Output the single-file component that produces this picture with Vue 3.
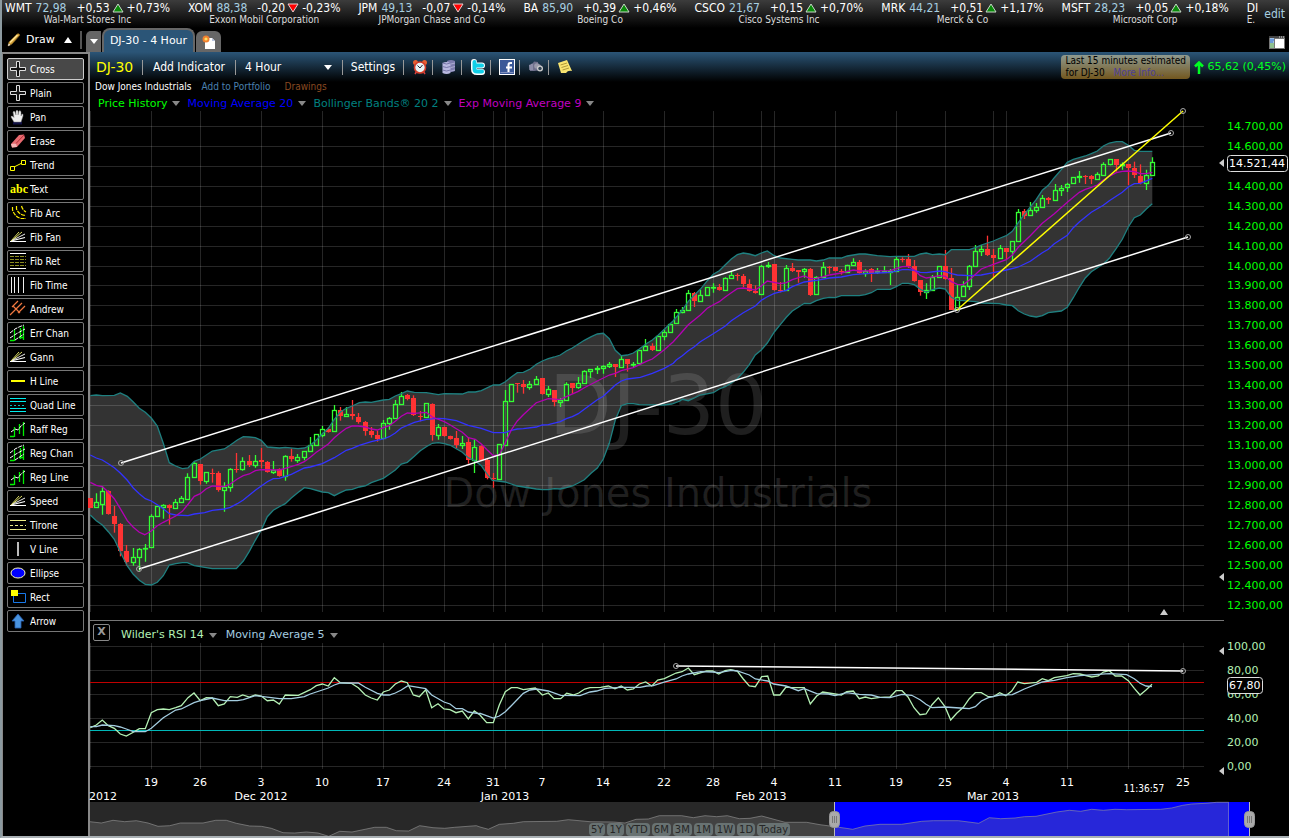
<script setup>
import { ref } from 'vue'

const quotes = [
  { s: 'WMT', p: '72,98', d: '+0,53', up: true, c: '+0,73%', n: 'Wal-Mart Stores Inc' },
  { s: 'XOM', p: '88,38', d: '-0,20', up: false, c: '-0,23%', n: 'Exxon Mobil Corporation' },
  { s: 'JPM', p: '49,13', d: '-0,07', up: false, c: '-0,14%', n: 'JPMorgan Chase and Co' },
  { s: 'BA', p: '85,90', d: '+0,39', up: true, c: '+0,46%', n: 'Boeing Co' },
  { s: 'CSCO', p: '21,67', d: '+0,15', up: true, c: '+0,70%', n: 'Cisco Systems Inc' },
  { s: 'MRK', p: '44,21', d: '+0,51', up: true, c: '+1,17%', n: 'Merck & Co' },
  { s: 'MSFT', p: '28,23', d: '+0,05', up: true, c: '+0,18%', n: 'Microsoft Corp' }
]

const tools = [
  ['Cross', 'cross'], ['Plain', 'cross'], ['Pan', 'pan'], ['Erase', 'erase'], ['Trend', 'trend'],
  ['Text', 'text'], ['Fib Arc', 'arc'], ['Fib Fan', 'fan'], ['Fib Ret', 'ret'], ['Fib Time', 'time'],
  ['Andrew', 'andrew'], ['Err Chan', 'chan'], ['Gann', 'fan'], ['H Line', 'hline'], ['Quad Line', 'quad'],
  ['Raff Reg', 'reg'], ['Reg Chan', 'chan'], ['Reg Line', 'reg'], ['Speed', 'fan'], ['Tirone', 'tirone'],
  ['V Line', 'vline'], ['Ellipse', 'ellipse'], ['Rect', 'rect'], ['Arrow', 'arrow']
]
const tool = ref('Cross')
const period = ref('4 Hour')
const periods = ['1 Hour', '4 Hour', 'Daily']
const ranges = ['5Y', '1Y', 'YTD', '6M', '3M', '1M', '1W', '1D', 'Today']
const indicators = [
  { n: 'Price History', k: 'price' },
  { n: 'Moving Average 20', k: 'ma' },
  { n: 'Bollinger Bands® 20 2', k: 'bb' },
  { n: 'Exp Moving Average 9', k: 'ema' }
]

// Candles: direction, high, body top, body bottom, low; three units per pixel below y
const candleBlocks = [
  { y: 380, d: `R 354 354 384 384,G 340 367 382 382,G 318 334 373 404,R 331 334 404 404,R 378 408 434 458,R 429 432 514 529,R 495 514 548 557,G 504 532 547 557,G 504 507 532 572,G 492 505 506 545,G 403 409 502 502,G 378 379 409 409,G 373 376 381 416,R 373 376 386 434,G 357 367 385 385,G 348 355 367 367,G 280 292 358 358,G 247 250 292 292,R 252 253 305 314,G 277 277 304 311,R 266 279 281 308,R 274 280 332 335,G 307 322 331 395,G 265 268 322 335,R 219 267 271 278,G 232 244 268 272,R 225 244 257 261,G 225 244 257 263,R 204 240 248 265,R 243 246 278 278,G 243 270 278 282,R 265 267 288 290,G 226 229 289 302,R 206 229 239 245,G 222 232 241 248,G 213 214 233 241,G 171 196 214 214,G 163 163 196 196,G 138 148 166 172,R 142 148 158 158,G 75 91 154 156,R 81 90 110 122,G 81 104 109 109,R 60 104 110 119,R 99 111 128 131,R 123 126 155 167,R 141 153 167 173,R 152 165 177 185,G 120 130 175 178` },
  { y: 320, d: `G 291 296 311 329,G 240 253 295 295,G 216 230 253 254,R 222 226 237 241,R 226 234 287 288,R 273 288 293 304,G 250 250 292 292,R 250 253 347 362,G 312 322 347 359,R 320 321 350 350,R 347 349 359 359,R 333 354 377 385,G 348 370 377 387,R 352 366 422 431,G 358 382 420 459,R 376 379 420 420,R 417 420 476 478,R 459 474 479 503,G 373 373 478 478,G 210 244 376 376,G 193 193 244 244,R 189 190 194 218,R 180 192 203 221,G 183 193 202 209,G 168 178 193 193,R 174 175 224 224,G 198 208 223 231,R 210 211 248 259,G 234 242 247 261,G 187 193 241 241,R 190 191 204 221,G 171 190 203 206,G 151 154 190 190,G 148 148 154 174,G 138 146 148 162,G 136 139 145 161,G 126 133 138 144,R 132 133 143 171,G 108 118 142 142,R 117 118 132 155,G 126 132 134 141,G 91 91 130 130,G 57 79 91 93,R 70 80 92 93,G 49 49 91 91,G 28 37 49 61,G 13 13 37 37` },
  { y: 230, d: `G 237 247 280 280,G 231 241 247 250,G 180 190 241 241,R 186 190 215 231,G 179 196 214 214,G 172 172 196 196,G 160 171 173 188,R 162 171 182 182,G 142 145 181 181,G 124 136 145 147,R 130 136 140 152,R 132 138 164 171,R 148 163 185 185,R 166 183 191 191,G 105 109 193 193,G 96 105 109 114,R 102 102 182 182,R 156 181 183 187,G 105 115 181 183,R 99 114 123 126,R 120 121 126 158,G 114 118 124 143,R 114 117 195 198,G 139 142 193 193,G 96 112 142 142,R 108 112 116 131,R 111 111 124 124,R 117 123 126 134,G 104 106 127 127,G 85 97 107 107,R 90 96 131 131,G 118 124 131 140,R 114 118 129 156,G 114 124 128 132,G 108 123 126 126,G 117 123 126 165,G 79 88 123 123,R 82 87 90 97,R 72 87 109 114,R 90 108 155 155,R 150 151 188 197,G 160 182 188 207,G 135 142 181 181,G 109 109 142 142,R 60 108 149 149` },
  { y: 105, d: `R 489 519 615 615,G 538 577 613 613,G 529 544 574 574,G 480 484 544 555,G 420 439 484 484,G 421 433 438 453,R 392 432 452 453,R 432 450 461 516,G 420 430 460 460,R 429 430 443 462,G 408 409 439 466,G 312 322 409 409,R 312 320 333 342,G 291 316 331 331,G 294 306 316 323,G 270 280 307 307,R 276 280 287 297,G 237 256 286 286,G 240 250 256 273,G 233 238 248 261,G 217 217 235 235,G 198 213 217 233,R 210 213 217 237,R 210 213 224 237,G 202 208 223 223,G 172 178 211 211,G 162 163 178 181,R 162 163 182 200,G 172 177 182 194,R 177 178 191 240,R 170 190 212 219,R 178 213 236 238,G 194 211 235 255,G 157 172 211 211` }
]
const candles = candleBlocks
  .flatMap(b => b.d.split(',').map(row => {
    const [dir, ...v] = row.split(' ')
    const [h, t, bo, l] = v.map(n => b.y + Number(n) / 3)
    return { up: dir === 'G', h, t: Math.floor(t), b: Math.floor(bo), l }
  }))
  .map((c, i) => ({ ...c, x: Math.floor(90.3 + 6.106 * i) + 0.5 }))

// Turns "x,y x,y ..." runs, three units per pixel from an origin, into one point list
const trace = (...runs) => runs
  .map(([ox, oy, s]) => s.split(' ').map(p => {
    const [x, y] = p.split(',').map(Number)
    return `${(ox + x / 3).toFixed(1)},${(oy + y / 3).toFixed(1)}`
  }).join(' '))
  .join(' ')

const upper = trace(
  [88, 380, '7,47 25,45 43,47 79,46 97,39 118,49 136,66 154,85 172,97 190,114 208,138 226,190 244,248 263,258 283,266 300,264 319,244 337,237 373,213 409,207 427,195 448,180 466,170 484,171 502,173 520,181 538,201 574,204 592,202 630,206 649,204 667,196 685,180 703,161 721,145 739,118 757,96 775,85 793,78 814,68 832,66 850,67'],
  [380, 320, '10,240 28,238 46,228 64,221 82,213 103,217 139,218 175,224 193,221 247,222 265,216 286,216 304,212 340,195 358,195 376,185 394,171 412,158 430,157 451,147 469,133 487,123 505,116 523,111 541,105 559,93 577,84 613,61 634,50 652,42 670,40 688,56 706,91 724,107 742,105 760,99 778,87 799,71 817,60 835,45 853,28 880,2'],
  [640, 230, '127,240 145,214 163,196 181,178 202,152 220,133 238,122 256,104 274,87 292,74 310,69 328,72 346,77 364,69 382,63 403,77 421,84 457,88 475,90 511,90 529,93 550,90 568,84 604,84 622,78 658,72 676,72 712,77 750,80 769,79 823,79 841,72 859,69 877,74 898,72 916,74'],
  [930, 105, '64,434 118,434 136,428 154,420 172,414 190,408 211,399 229,392 247,379 265,353 283,328 301,306 319,283 337,256 355,241 373,218 394,194 412,172 430,163 448,158 466,153 484,146 502,138 520,123 538,114 559,110 577,110 595,121 613,136 631,139 667,139']
)
const lower = trace(
  [88, 380, '7,405 25,422 43,435 61,455 79,478 97,516 118,558 136,583 154,601 172,613 190,615 208,607 226,587 244,555 263,551 283,548 298,548 319,557 337,560 373,566 445,566 466,543 484,514 502,481 520,450 538,410 556,391 574,380 592,371 610,354 631,337 649,323 667,326 703,336 721,338 739,347 757,338 775,330 793,328 814,321 832,318 850,308 886,295'],
  [380, 320, '28,463 46,450 64,432 82,427 103,409 121,392 139,380 157,370 175,368 193,371 211,376 229,386 247,397 265,413 286,423 304,437 322,463 337,481 376,486 394,492 412,498 451,504 469,507 487,509 505,509 523,506 541,507 559,503 577,498 595,489 613,479 634,459 652,444 670,417 688,370 706,300 724,257 742,251 760,251 778,254 850,255 875,252 900,243'],
  [640, 230, '127,508 145,512 163,504 181,495 220,488 238,477 256,470 274,459 292,446 310,427 328,404 346,375 364,360 382,339 403,306 421,284 439,262 457,243 475,232 493,220 511,221 529,212 550,205 568,202 586,203 604,197 658,197 676,194 694,188 712,178 751,178 769,170 787,160 805,160 823,164 841,178 859,187 877,179 898,174 916,177'],
  [930, 105, '64,577 82,586 100,587 136,590 154,594 208,596 229,600 247,602 265,617 283,627 301,633 319,636 337,632 355,623 394,618 412,607 430,578 448,547 466,519 484,500 520,477 538,460 559,430 577,403 595,366 613,338 631,330 649,312 667,296']
)
const band = upper + ' ' + lower.split(' ').reverse().join(' ')
const ma20 = trace(
  [88, 380, '7,225 25,234 43,240 61,251 79,263 97,279 118,301 136,324 154,341 172,356 190,363 208,374 226,386 244,401 263,405 300,407 319,402 350,398 373,391 409,387 427,382 448,371 466,360 502,331 538,305 556,296 574,295 610,283 649,264 667,261 703,251 739,233 775,211 793,205 814,196 850,185'],
  [380, 320, '10,357 28,350 46,339 64,324 103,307 139,298 175,295 193,296 229,302 265,316 304,325 340,338 376,338 394,331 412,327 430,326 469,321 487,315 505,314 541,305 559,296 577,290 595,281 613,268 652,239 670,229 706,195 724,183 742,177 781,172 817,160 853,145 880,130'],
  [640, 230, '109,390 127,377 145,362 163,350 181,335 220,311 256,288 274,272 310,248 346,228 364,211 382,200 403,190 439,181 457,170 493,156 529,151 568,144 604,141 640,134 676,131 712,129 751,127 787,119 805,119 823,121 841,127 859,128'],
  [930, 105, '28,498 46,500 64,506 82,510 118,512 154,510 190,503 229,495 265,486 301,469 337,443 355,433 373,416 412,391 430,368 448,351 484,322 520,301 538,287 577,262 595,246 613,236 631,235 667,220']
)
const ema9 = trace(
  [88, 380, '7,307 25,316 43,320 61,336 79,356 97,386 118,422 136,442 154,457 170,464 190,453 208,437 226,427 263,408 283,394 301,372 319,349 337,341 355,326 373,318 409,320 427,312 448,297 466,287 484,282 502,272 520,269 574,270 592,265 631,253 649,245 667,232 685,217 703,205 721,192 739,173 757,158 775,145 793,138 811,138 832,141 850,147 868,150'],
  [380, 320, '10,323 28,317 46,304 64,289 82,279 103,280 139,277 157,291 193,305 211,315 229,326 247,337 265,353 286,358 304,372 322,390 340,407 358,405 376,368 394,330 412,303 430,284 469,248 505,236 541,239 559,230 595,214 613,203 652,183 688,165 706,160 724,152 760,143 799,124 817,117 853,89 880,65'],
  [640, 230, '120,313 145,284 181,255 202,235 220,224 238,215 256,201 274,188 292,176 310,174 346,180 364,168 382,153 421,161 439,158 457,149 493,138 511,146 529,145 550,140 568,135 604,129 640,120 658,123 751,122 769,116 787,110 805,109 823,120 841,137 859,144'],
  [930, 105, '0,517 28,512 46,514 64,530 82,538 100,539 118,525 154,492 190,478 229,464 247,450 265,427 301,392 337,355 373,326 412,292 448,262 466,253 484,247 502,240 520,225 538,214 559,203 577,199 595,198 613,200 631,206 649,206 667,202']
)
const rsi = trace(
  [88, 615, '7,338 25,330 43,315 61,332 79,340 97,357 115,363 136,352 154,341 172,341 190,293 208,284 226,282 244,284 263,278 280,272 300,248 318,234 337,257 355,248 373,249 391,272 409,267 427,245 448,247 464,240 484,246 502,240 520,243 538,257 556,255 574,267 592,240 631,241 667,224 685,212 703,207 721,213 739,188 757,203 790,205 811,218 832,240 850,249 868,255 886,231 904,225 922,207 940,198 958,203 976,240 994,245 1013,224 1031,278 1050,266 1068,282 1086,284 1104,293 1123,288 1141,312 1159,288'],
  [480, 615, '0,300 20,323 40,323 58,270 76,230 94,218 112,218 130,224 166,219 187,240 205,234 222,251 242,251 260,235 280,240 296,234 314,222 330,218 362,217 385,213 405,221 424,213 442,225 460,222 478,207 497,201 515,213 533,195 553,191 588,174 606,170 625,159 643,179 680,168 698,168 716,177 735,167 752,164 772,168 790,192 808,213 826,215 845,185 863,183 881,240 900,240 918,216 935,218 973,218 991,267 1010,243 1028,231 1084,240 1100,230 1120,228 1138,251 1156,246 1174,251'],
  [880, 560, '0,412 30,411 48,392 66,392 84,411 102,443 120,464 138,462 156,434 175,413 195,440 212,480 230,460 250,442 268,416 286,398 304,398 325,410 340,410 359,398 377,407 395,393 413,366 433,371 470,367 487,356 505,362 523,353 560,347 580,341 600,342 635,351 655,348 670,336 688,332 706,348 725,348 745,362 763,385 780,405 798,390 816,373']
)
const rsiMa = trace(
  [88, 615, '7,335 25,335 43,330 79,332 97,336 115,342 136,350 172,350 190,340 226,308 263,285 280,282 318,263 337,257 373,249 409,257 448,257 466,254 502,242 574,251 610,251 649,245 667,237 721,219 739,210 757,204 811,204 832,217 868,235 886,240 904,240 922,234 940,225 960,212 1013,221 1031,240 1068,261 1086,267 1104,281 1123,281 1141,291 1175,296'],
  [480, 615, '0,295 40,309 58,303 76,290 94,272 130,235 150,225 170,222 205,228 242,241 300,242 330,231 350,228 375,220 424,217 480,217 500,213 520,212 550,202 588,192 606,183 625,177 662,170 698,171 716,173 755,166 772,168 808,180 826,192 863,198 881,207 918,213 955,227 973,221 1010,236 1045,237 1065,242 1100,233 1138,238 1174,240'],
  [880, 560, '0,412 30,413 66,403 95,406 120,419 138,433 156,443 195,441 240,444 268,446 286,440 304,423 325,413 359,405 397,404 433,387 487,366 523,361 560,353 600,347 655,343 688,341 740,344 763,356 780,370 798,378 816,380']
)
const history = trace(
  [88, 615, '6,620 40,624 75,616 110,620 145,617 180,624 210,634 245,632 277,624 345,624 383,616 415,616 445,625 485,633 520,634 550,640 585,653 620,654 655,651 690,654 722,664 755,649 792,651 860,637 895,637 925,647 962,648 995,632 1035,638 1070,640 1100,637 1165,632'],
  [480, 615, '0,636 25,643 58,628 100,625 130,620 230,619 265,614 330,620 400,621 435,624 468,613 505,612 538,602 605,602 640,608 675,602 710,605 742,602 778,611 810,610 845,603 915,622 980,622 1020,629 1065,635 1118,643 1155,633'],
  [880, 560, '0,793 65,793 125,784 160,782 235,782 296,790 328,773 362,776 405,774 433,770 468,769 530,756 568,751 602,754 635,748 670,751 705,748 740,749 842,748 875,744 908,736 935,732 978,730 1010,727 1046,727']
)
const historyArea = history + ' 1229,836 90,836'

const gridX = [90, 151, 200, 261, 322, 383, 444, 493, 505, 542, 603, 664, 713, 761, 774, 835, 896, 945, 993, 1006, 1067, 1128, 1183]
const gridPrice = Array.from({ length: 25 }, (_, i) => {
  const p = 14700 - i * 100
  return { p, y: Math.floor(126.3 + i * 19.96), t: `${Math.floor(p / 1000)}.${String(p % 1000).padStart(3, '0')},00` }
})
// The last-price tag takes the place of the 14.500 label
const priceLabels = gridPrice.filter(g => g.p !== 14500)
const gridRsi = [100, 80, 60, 40, 20, 0].map((v, i) => ({ y: 646 + i * 24, t: `${v},00` }))
const days = [
  [151, '19'], [200, '26'], [261, '3'], [322, '10'], [383, '17'], [444, '24'], [493, '31'], [542, '7'],
  [603, '14'], [664, '22'], [713, '28'], [774, '4'], [835, '11'], [896, '19'], [945, '25'], [1006, '4'], [1067, '11'], [1183, '25']
]
const months = [[103, '2012'], [261, 'Dec 2012'], [505, 'Jan 2013'], [761, 'Feb 2013'], [993, 'Mar 2013']]
</script>

<template>
  <div class="app">
    <header class="ticker">
      <ul class="quotes">
        <li v-for="q in quotes" :key="q.s" class="quote">
          <div class="line">
            <span>{{ q.s }}</span><span class="last">{{ q.p }}</span><span class="delta">{{ q.d }}</span>
            <svg width="12" height="10" viewBox="0 0 12 10">
              <path v-if="q.up" d="M6 1L11 9H1Z" fill="#0a8a0a" stroke="#c8d8c8" />
              <path v-else d="M6 9L11 1H1Z" fill="#f00" stroke="#e8d0d0" />
            </svg>
            <span>{{ q.c }}</span>
          </div>
          <div class="company">{{ q.n }}</div>
        </li>
        <li class="quote next">
          <div class="line">DI</div>
          <div class="company">E.</div>
        </li>
      </ul>
      <a class="edit" href="#edit">edit</a>
    </header>

    <nav class="tabs">
      <button class="draw" type="button">
        <svg width="16" height="16" viewBox="0 0 16 16">
          <path d="M2 14L3 10L11 2Q13 1 14 3L6 12Z" fill="#d9a53c" stroke="#7a5a1c" stroke-width=".8" />
          <path d="M4 10.500L11.500 3" stroke="#ffe79a" stroke-width="1.200" />
          <path d="M2 14L2.600 11.500L4.500 13Z" fill="#eee" />
        </svg>
        <span>Draw</span>
        <svg width="8" height="6" viewBox="0 0 8 6"><path d="M0 6L4 0L8 6Z" fill="#fff" /></svg>
      </button>
      <button class="tab small" type="button" aria-label="Tab list">
        <svg width="8" height="5" viewBox="0 0 8 5"><path d="M0 0H8L4 5Z" fill="#fff" /></svg>
      </button>
      <button class="tab current" type="button">DJ-30 - 4 Hour</button>
      <button class="tab add" type="button" aria-label="New tab">
        <svg width="14" height="14" viewBox="0 0 14 14">
          <path d="M3 3H10L13 6V14H3Z" fill="#fff" />
          <path d="M10 3V6H13Z" fill="#b8c4e0" />
          <circle cx="4" cy="4" r="3.500" fill="#f08030" /><circle cx="4" cy="4" r="1.600" fill="#ffe060" />
        </svg>
      </button>
      <button class="layout" type="button" aria-label="Layout">
        <svg width="16" height="13" viewBox="0 0 16 13">
          <rect width="16" height="13" fill="#777" /><rect y="0" width="16" height="2" fill="#444" />
          <rect x="1" y="2" width="4" height="10" fill="#9bc0e8" /><rect x="1" y="7" width="4" height="5" fill="#8fc08f" />
          <rect x="6" y="3" width="9" height="9" fill="#fff" /><path d="M1 4H5M1 6H4" stroke="#3a70c8" />
          <path d="M10 1H11M12 1H13M14 1H15" stroke="#ddd" />
        </svg>
      </button>
    </nav>

    <div class="body">
      <aside class="tools">
        <button v-for="[name, icon] in tools" :key="name" type="button" class="tool" :class="{ on: tool === name }" @click="tool = name">
          <svg width="16" height="16" viewBox="0 0 16 16" fill="none">
            <template v-if="icon === 'cross'">
              <path d="M6.500 .500H9.500V6.500H15.500V9.500H9.500V15.500H6.500V9.500H.500V6.500H6.500Z" fill="#111" stroke="#ddd" />
            </template>
            <template v-else-if="icon === 'pan'">
              <path d="M3 14H12" stroke="#114" stroke-width="3" />
              <path d="M4 13L1 8Q1 6.500 3 7.500L4 8.500L3 3Q4 1.500 5 3L6 6V2Q7 .500 8 2V6L9 2Q10.500 1 11 3V7L12 5Q13.500 4.500 13 7L11 13Z" fill="#eee" stroke="#888" stroke-width=".5" />
            </template>
            <template v-else-if="icon === 'erase'">
              <path d="M1 11L9 2L14 1.500L15 5L7 14L2 14.500Z" fill="#e86a70" />
              <path d="M1 11L6 10.500L7 14L2 14.500Z" fill="#f7b6b6" />
              <path d="M6 10.500L14 2" stroke="#b03038" />
            </template>
            <template v-else-if="icon === 'trend'">
              <path d="M4 10L12 6" stroke="#ff0" />
              <path d="M.500 9.500H4.500V13.500H.500ZM11.500 3.500H15.500V7.500H11.500Z" stroke="#ff0" />
            </template>
            <text v-else-if="icon === 'text'" x="0" y="12" class="abc">abc</text>
            <template v-else-if="icon === 'arc'">
              <path d="M2.500 2V5Q5 12 11 13.500H16M6.500 1V4Q9 10 16 10.500M11.500 1Q12.500 5 16 7" stroke="#fe0" stroke-width="1.200" stroke-dasharray="4 1" />
            </template>
            <template v-else-if="icon === 'fan'">
              <path d="M0 12.500H16M1 12L15 8.500" stroke="#fff" stroke-width="1.200" /><path d="M1 12L9 3M2 11.500L12 3" stroke="#dd6" /><path d="M2 11.500L15 5" stroke="#eee" />
            </template>
            <template v-else-if="icon === 'ret'">
              <path d="M0 .500H16M0 15.500H16" stroke="#fff" />
              <path d="M0 3.500H16M0 6.500H16M0 9.500H16M0 12.500H16" stroke="#8c8c20" stroke-dasharray="4 1" />
            </template>
            <path v-else-if="icon === 'time'" d="M1.500 0V16M4.500 0V16M8.500 0V16M13.500 0V16" stroke="#eee" />
            <path v-else-if="icon === 'andrew'" d="M0 14L12 2M2 6L8 0M8 12L15 5M3 5L10 12" stroke="#f07840" stroke-width="1.200" />
            <template v-else-if="icon === 'chan'">
              <path d="M4.500 5V16M10.500 3V14M13.500 1V15M0 15.500H4M9 12.500H14" stroke="#0e0" stroke-width="1.300" />
              <path d="M0 8L5 4L9 2L14 0M0 13L6 9L15 4M5 15L14 9" stroke="#fff" stroke-dasharray="4 1" />
            </template>
            <path v-else-if="icon === 'hline'" d="M1 8H15" stroke="#ff0" stroke-width="2" />
            <template v-else-if="icon === 'quad'">
              <path d="M0 1.500H16M0 4.500H16M0 11.500H16M0 14.500H16" stroke="#0ee" /><path d="M0 8.500H16" stroke="#0bb" stroke-dasharray="2 2" />
            </template>
            <template v-else-if="icon === 'reg'">
              <path d="M4.500 6V16M9.500 3V13M13.500 1V15M0 15.500H4" stroke="#0e0" stroke-width="1.300" />
              <path d="M1 11L5 8L8 9L11 5L15 2" stroke="#fff" stroke-dasharray="4 1" />
            </template>
            <template v-else-if="icon === 'tirone'">
              <path d="M0 3.500H16M0 12.500H16" stroke="#ee8" /><path d="M0 8.500H16" stroke="#ee8" stroke-dasharray="3 2" />
            </template>
            <path v-else-if="icon === 'vline'" d="M8 1V15" stroke="#bbb" stroke-width="2" />
            <ellipse v-else-if="icon === 'ellipse'" cx="8" cy="8" rx="7" ry="5" fill="#00f" stroke="#ffb" />
            <template v-else-if="icon === 'rect'">
              <path d="M3.500 4.500H15.500V13.500H3.500Z" stroke="#1878e8" /><path d="M1 1H8V7H1Z" fill="#ff0" />
            </template>
            <path v-else d="M8 1L14 8H11V15H5V8H2Z" fill="#4a94e0" stroke="#2a60b0" stroke-width=".8" />
          </svg>
          <span>{{ name }}</span>
        </button>
      </aside>

      <main class="main">
        <div class="toolbar">
          <strong class="symbol">DJ-30</strong>
          <i class="sep"></i>
          <button type="button" class="item indicator">Add Indicator</button>
          <i class="sep"></i>
          <label class="period">
            <select v-model="period" aria-label="Period">
              <option v-for="p in periods" :key="p">{{ p }}</option>
            </select>
            <svg width="8" height="5" viewBox="0 0 8 5"><path d="M0 0H8L4 5Z" fill="#fff" /></svg>
          </label>
          <i class="sep"></i>
          <button type="button" class="item settings">Settings</button>
          <i class="sep"></i>
          <button type="button" class="icon" aria-label="Alarm">
            <svg width="16" height="16" viewBox="0 0 16 16">
              <path d="M3 15L5 12M13 15L11 12" stroke="#d44" stroke-width="1.500" />
              <circle cx="3.500" cy="3.500" r="2.500" fill="#e86030" /><circle cx="12.500" cy="3.500" r="2.500" fill="#e86030" />
              <circle cx="8" cy="8.500" r="5.500" fill="#e8f4f4" stroke="#d43c28" stroke-width="1.600" />
              <path d="M5.500 6.500L8 9L10.500 6" fill="none" stroke="#223" />
            </svg>
          </button>
          <i class="sep"></i>
          <button type="button" class="icon" aria-label="Data">
            <svg width="16" height="16" viewBox="0 0 16 16">
              <path d="M6 2Q10 0 14 2V12Q10 14 6 12Z" fill="#7c7cae" /><path d="M1.500 4Q5.500 2 9.500 4V14Q5.500 16 1.500 14Z" fill="#b8b8e0" />
              <path d="M1.500 4Q5.500 6 9.500 4M1.500 7.500Q5.500 9.500 9.500 7.500M1.500 11Q5.500 13 9.500 11" fill="none" stroke="#66669a" stroke-width=".8" />
              <path d="M10 5L14 4M10 8.500L14 7.500M10 12L14 11" stroke="#c0c0e0" stroke-width=".7" />
            </svg>
          </button>
          <i class="sep"></i>
          <button type="button" class="icon" aria-label="Twitter">
            <svg width="16" height="16" viewBox="0 0 16 16">
              <path d="M4 3V10Q4 13 7 13H12M4 6.500H12" fill="none" stroke="#fff" stroke-width="6" stroke-linecap="round" stroke-linejoin="round" />
              <path d="M4.500 3V10Q4.500 12.500 7 12.500H12M4.500 6.500H12" fill="none" stroke="#10cfe8" stroke-width="4" stroke-linecap="round" />
            </svg>
          </button>
          <i class="sep"></i>
          <button type="button" class="icon" aria-label="Facebook">
            <svg width="16" height="16" viewBox="0 0 16 16">
              <rect x=".5" y=".5" width="15" height="15" fill="#3b5998" stroke="#fff" />
              <path d="M13 4H11.500Q9.500 4 9.500 6V14M7 8.500H13" fill="none" stroke="#fff" stroke-width="2" /><path d="M1.500 13.500H14.500" stroke="#8090c0" />
            </svg>
          </button>
          <i class="sep"></i>
          <button type="button" class="icon" aria-label="Snapshot">
            <svg width="16" height="16" viewBox="0 0 16 16">
              <path d="M1 6L5 4L6 2.500L10 3L10 5L13 6V11L6 12L2 12Z" fill="#70708c" /><path d="M2 6V11M4 5V11" stroke="#aaaac4" />
              <circle cx="9" cy="7" r="2.800" fill="#99a" /><circle cx="12" cy="9.500" r="3" fill="#ccc" /><circle cx="12" cy="9.500" r="1.700" fill="#345" />
            </svg>
          </button>
          <i class="sep"></i>
          <button type="button" class="icon" aria-label="Notes">
            <svg width="16" height="16" viewBox="0 0 16 16">
              <path d="M1 4L10 1L15 12Q11 11 9 14L4 14Z" fill="#f8e470" /><path d="M3.500 6L10 4M4.500 8.500L11 6.500M5.500 11L12 9" stroke="#b09838" />
            </svg>
          </button>
          <div class="notice">Last 15 minutes estimated<br />for DJ-30 <a href="#info">More Info...</a></div>
          <div class="change">
            <svg width="10" height="13" viewBox="0 0 10 13"><path d="M5 1V13M1 5.500L5 1.500L9 5.500" fill="none" stroke="#0f2" stroke-width="2.500" /></svg>
            65,62 (0,45%)
          </div>
        </div>

        <div class="meta">
          <span>Dow Jones Industrials</span>
          <a class="portfolio" href="#portfolio">Add to Portfolio</a>
          <a class="drawings" href="#drawings">Drawings</a>
        </div>

        <div class="legend">
          <button v-for="n in indicators" :key="n.k" type="button" :class="n.k">
            {{ n.n }}<svg width="8" height="5" viewBox="0 0 8 5"><path d="M0 0H8L4 5Z" fill="#888" /></svg>
          </button>
        </div>

        <svg class="chart" viewBox="90 111 1199 510" role="img" aria-label="DJ-30 price chart">
          <polygon :points="band" class="band" />
          <g class="grid">
            <path v-for="x in gridX" :key="x" :d="`M${x + 0.5} 111V612`" />
            <path v-for="g in gridPrice" :key="g.y" :d="`M90 ${g.y + 0.5}H1204`" />
          </g>
          <g class="mark">
            <text x="658" y="434" font-size="82">DJ-30</text>
            <text x="658" y="507" font-size="40">Dow Jones Industrials</text>
          </g>
          <g v-for="(c, i) in candles" :key="i" :class="c.up ? 'up' : 'down'">
            <template v-if="c.up">
              <path :d="`M${c.x} ${c.h}V${c.t}M${c.x} ${c.b}V${c.l}`" />
              <rect :x="c.x - 2" :y="c.t + 0.5" width="4" :height="Math.max(c.b - c.t, 0.5)" />
            </template>
            <template v-else>
              <path :d="`M${c.x} ${c.h}V${c.l}`" />
              <rect :x="c.x - 2.5" :y="c.t" width="5" :height="Math.max(c.b - c.t, 1)" />
            </template>
          </g>
          <polyline :points="upper" class="curve bband" />
          <polyline :points="lower" class="curve bband" />
          <polyline :points="ma20" class="curve cma" />
          <polyline :points="ema9" class="curve cema" />
          <g class="trendline">
            <path d="M121 463L1171 133M139 569L1188 237" />
            <path d="M957 310L1183 111" class="yellow" />
            <circle v-for="[x, y] in [[121, 463], [1171, 133], [139, 569], [1188, 237], [957, 310], [1183, 111]]" :key="x" :cx="x" :cy="y" r="2.500" />
          </g>
          <path d="M90 620.500H1224" stroke="#777" />
          <path d="M1160 615L1164 609L1168 615ZM1224 159V167L1219 163ZM1224 573V581L1219 577Z" fill="#ccc" />
          <text v-for="g in priceLabels" :key="g.t" x="1227" :y="g.y + 4" class="price-label">{{ g.t }}</text>
          <rect x="1227.500" y="155.500" width="60" height="16" rx="3" class="tag" />
          <text x="1229" y="167" class="tag-text">14.521,44</text>
        </svg>

        <div class="rsi-head">
          <button type="button" class="close" aria-label="Remove indicator">X</button>
          <button type="button" class="wilder">Wilder's RSI 14<svg width="8" height="5" viewBox="0 0 8 5"><path d="M0 0H8L4 5Z" fill="#888" /></svg></button>
          <button type="button" class="smooth">Moving Average 5<svg width="8" height="5" viewBox="0 0 8 5"><path d="M0 0H8L4 5Z" fill="#888" /></svg></button>
        </div>

        <svg class="chart" viewBox="90 643 1199 159" role="img" aria-label="RSI chart">
          <g class="grid">
            <path v-for="x in gridX" :key="x" :d="`M${x + 0.5} 643V769`" />
            <path v-for="g in gridRsi" :key="g.y" :d="`M90 ${g.y + 0.5}H1204`" />
          </g>
          <path d="M90 682.500H1204" stroke="#c00000" />
          <path d="M90 730.500H1204" stroke="#00b8b8" />
          <polyline :points="rsi" class="curve crsi" />
          <polyline :points="rsiMa" class="curve crsima" />
          <g class="trendline">
            <path d="M676 666L1183 671" />
            <circle cx="676" cy="666" r="2.500" /><circle cx="1183" cy="671" r="2.500" />
          </g>
          <path d="M1224 647V655L1219 651ZM1224 767V775L1219 771Z" fill="#ccc" />
          <text v-for="g in gridRsi" :key="g.t" x="1227" :y="g.y + 4" class="rsi-label">{{ g.t }}</text>
          <rect x="1227.500" y="677.500" width="35" height="16" rx="3" class="tag" />
          <text x="1229" y="689" class="tag-text">67,80</text>
          <g class="dates">
            <text v-for="[x, t] in days" :key="x" :x="x" y="786">{{ t }}</text>
            <text v-for="[x, t] in months" :key="t" :x="x" y="800">{{ t }}</text>
            <text x="1144" y="792" class="clock">11:36:57</text>
          </g>
        </svg>

        <div class="navigator">
          <svg class="chart" viewBox="90 802 1199 34" role="img" aria-label="Price history range">
            <rect x="90" y="802" width="744" height="34" fill="#282828" />
            <rect x="834" y="802" width="416" height="34" fill="#00f" />
            <polygon :points="historyArea" class="past" />
            <polyline :points="history" class="past-line" />
            <path d="M1228.500 802V836" stroke="#6060d0" />
            <path d="M834.500 802V836M1249.500 802V836" stroke="#bbb" />
            <g v-for="x in [834, 1249]" :key="x">
              <rect :x="x - 4.5" y="811.500" width="10" height="16" rx="4" fill="#aaa" stroke="#999" />
              <path :d="`M${x - 1.5} 816V823M${x + 0.5} 816V823M${x + 2.5} 816V823`" stroke="#777" />
            </g>
          </svg>
          <div class="ranges">
            <button v-for="r in ranges" :key="r" type="button">{{ r }}</button>
          </div>
        </div>
      </main>
    </div>
  </div>
</template>

<style>
html, body { background: #000; overflow-x: hidden; }
</style>

<style scoped>
* { box-sizing: border-box; }
.app {
  min-height: 100vh;
  display: flex;
  flex-direction: column;
  background: #000;
  color: #fff;
  border-left: 2px solid #8c9aa0;
  border-bottom: 2px solid #a9b0b4;
  font: 11px/14px "DejaVu Sans", Verdana, sans-serif;
  overflow: hidden;
}
button, select { font: inherit; color: inherit; background: none; border: 0; padding: 0; margin: 0; }
a { text-decoration: none; }
svg { display: block; flex: none; }

.ticker { display: flex; align-items: flex-start; height: 28px; padding-top: 1px; background: linear-gradient(#3c3c3c, #000); }
.quotes { flex: 1; display: flex; gap: 18px; list-style: none; margin: 0; padding: 0 0 0 3px; overflow: hidden; font: 12px/14px "DejaVu Sans Condensed", Tahoma, sans-serif; }
.quote { flex: none; text-align: center; }
.quote.next { text-align: left; }
.line { display: flex; align-items: center; white-space: nowrap; }
.last { color: #a8cfe0; margin-left: 4px; }
.delta { margin-left: 10px; margin-right: 2px; }
.line svg { margin-right: 3px; }
.company { font-size: 10px; line-height: 10px; color: #ddd; white-space: nowrap; }
.edit { flex: none; margin: 6px 4px 0 0; color: #a8cfe0; font: 12px/14px "DejaVu Sans Condensed", Tahoma, sans-serif; }

.tabs { display: flex; align-items: flex-end; height: 24px; }
.draw { display: flex; align-items: center; width: 80px; height: 18px; margin: 0 4px 3px 0; padding-left: 4px; gap: 4px; border-right: 2px solid #555; font-size: 11px; }
.draw svg:last-child { margin-left: 5px; }
.tab { display: flex; align-items: center; justify-content: center; height: 21px; background: #666; border-radius: 6px 6px 0 0; }
.small { width: 15px; margin-right: 1px; border-radius: 5px 0 0 0; }
.current { height: 24px; width: 93px; border: 2px solid #666; border-bottom: 0; border-radius: 8px 8px 0 0; background: #2b5577; white-space: nowrap; font-size: 11px; }
.add { width: 25px; margin-left: 1px; }
.layout { margin: 0 4px 3px auto; }

.body { flex: 1; display: flex; }
.tools { flex: none; display: flex; flex-direction: column; gap: 2px; width: 88px; padding: 4px 4px 0; border: 2px solid #888; border-width: 2px 2px 0 1px; font: 10px "DejaVu Sans Condensed", Tahoma, sans-serif; }
.tool { display: flex; align-items: center; gap: 4px; height: 22px; padding-left: 2px; border: 1px solid #777; border-radius: 2px; }
.tool.on { background: #484848; border-color: #ccc; }
.tool svg { overflow: visible; }
.abc { font: bold 12px "Liberation Serif", serif; fill: #ff0; }

.main { flex: 1; min-width: 0; display: flex; flex-direction: column; }
.toolbar { display: flex; align-items: center; height: 30px; background: linear-gradient(#2b5577, #000); padding-left: 6px; }
.symbol { font-weight: 400; font-size: 14px; color: #ff0; width: 46px; }
.sep { flex: none; width: 1px; height: 15px; background: #999; }
.item, .period { font: 12px "DejaVu Sans Condensed", Tahoma, sans-serif; }
.indicator { width: 92px; }
.settings { width: 60px; }
.period { display: flex; align-items: center; width: 106px; padding: 0 10px 0 9px; }
.period select { flex: 1; min-width: 0; appearance: none; outline: 0; }
.icon { flex: none; display: flex; justify-content: center; width: 28px; padding-left: 3px; }
.notice { margin-left: auto; padding: 0 4px; width: 129px; height: 24px; border-radius: 4px; background: linear-gradient(#8f9a90, #73571e); color: #000; font: 10px/12px "DejaVu Sans Condensed", Tahoma, sans-serif; white-space: nowrap; }
.notice a { color: #4c3f94; margin-left: 6px; }
.change { display: flex; align-items: center; gap: 3px; margin: 0 3px 0 4px; color: #0f2; white-space: nowrap; }

.meta { display: flex; height: 14px; padding-left: 5px; align-items: flex-start; font: 10px/10px "DejaVu Sans Condensed", Tahoma, sans-serif; }
.portfolio { margin-left: 10px; color: #4a80b0; }
.drawings { margin-left: 14px; color: #8a4a20; }
.legend { display: flex; gap: 7px; height: 15px; padding-left: 8px; }
.legend button, .rsi-head .wilder, .rsi-head .smooth { display: flex; align-items: center; gap: 5px; white-space: nowrap; }
.price { color: #0f0; }
.ma { color: #00f; }
.bb { color: #008080; }
.ema { color: #c000c0; }

.chart { width: 100%; height: auto; overflow: visible; }
.grid path { stroke: #fff; stroke-opacity: .15; }
.band { fill: #333; }
.mark text { fill: #fff; fill-opacity: .12; text-anchor: middle; }
.up path, .up rect { fill: none; stroke: #3f3; stroke-width: 1.3; }
.down path { stroke: #f33; stroke-width: 1.3; }
.down rect { fill: #f33; }
.curve { fill: none; stroke-width: 1.3; }
.bband { stroke: #1f8080; }
.cma { stroke: #33f; }
.cema { stroke: #b400b4; }
.crsi { stroke: #b4f0b4; }
.crsima { stroke: #a4cde0; }
.trendline path { stroke: #fff; stroke-width: 1.5; }
.trendline .yellow { stroke: #ff0; }
.trendline circle { fill: none; stroke: #aaa; }
.price-label { fill: #0f0; }
.rsi-label { fill: #b4f0b4; }
.tag { fill: #000; stroke: #ddd; }
.tag-text { fill: #fff; }
.dates text { fill: #fff; text-anchor: middle; }
.dates .clock { font: 10px "DejaVu Sans Condensed", Tahoma, sans-serif; }

.rsi-head { display: flex; align-items: center; height: 22px; padding-left: 3px; }
.close { width: 17px; height: 17px; margin-right: 11px; border: 1px solid #888; border-radius: 2px; color: #999; font-weight: 700; line-height: 14px; }
.wilder, .smooth { padding-top: 6px; }
.wilder { color: #b4f0b4; margin-right: 9px; }
.smooth { color: #a4cde0; }

.navigator { position: relative; }
.past { fill: #808080; fill-opacity: .3; }
.past-line { fill: none; stroke: #999; stroke-opacity: .6; }
.ranges { position: absolute; left: 0; right: 0; bottom: 0; display: flex; justify-content: center; gap: 2px; }
.ranges button { height: 13px; padding: 0 2px; border-radius: 4px; background: #687272; color: #262626; font: 10px/13px "DejaVu Sans", Verdana, sans-serif; }
</style>
